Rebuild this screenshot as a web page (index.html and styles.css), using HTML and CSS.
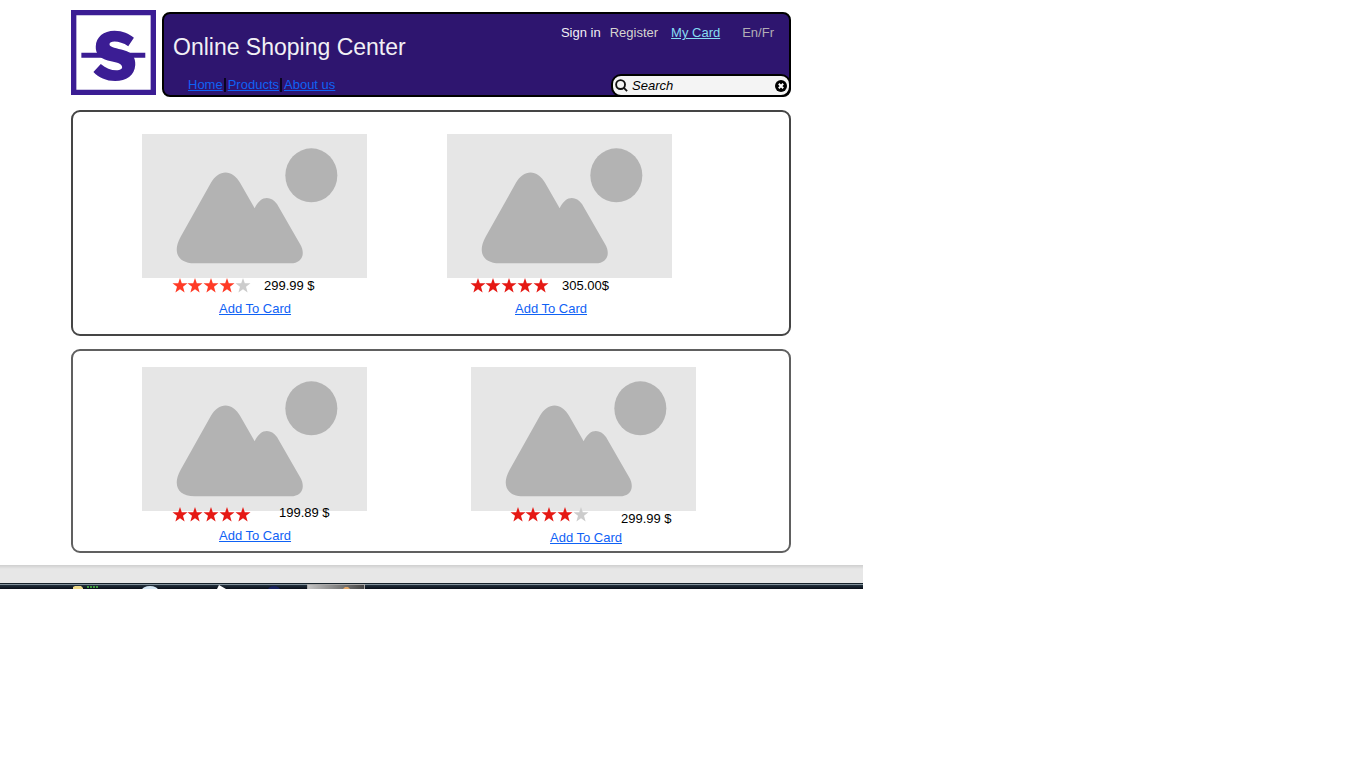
FILE: index.html
```html
<!DOCTYPE html>
<html lang="en">
<head>
<meta charset="utf-8">
<meta name="viewport" content="width=device-width, initial-scale=1">
<title>Online Shoping Center</title>
<link rel="stylesheet" href="styles.css">
</head>
<body>
<svg class="sprite" aria-hidden="true">
  <symbol id="picture" viewBox="0 0 675 432">
    <ellipse cx="508" cy="124" rx="78" ry="81"/>
    <path d="M116 308 L206 148 C230 105 271 105 295 148 L338 223 C356 183 387 185 405 210 L474 330 C492 360 480 388 446 388 L158 388 C104 388 92 350 116 308Z"/>
  </symbol>
  <symbol id="star" viewBox="0 0 16 16">
    <path d="M8 0 L9.9 5.6 L16 5.7 L11.2 9.4 L12.9 15.4 L8 12 L3.1 15.4 L4.8 9.4 L0 5.7 L6.1 5.6Z"/>
  </symbol>
  <symbol id="stars" viewBox="0 0 79 15">
    <use href="#star" x="0" width="16" height="15"/>
    <use href="#star" x="15" width="16" height="15"/>
    <use href="#star" x="31" width="16" height="15"/>
    <use href="#star" x="47" width="16" height="15"/>
    <use href="#star" class="last" x="63" width="16" height="15"/>
  </symbol>
</svg>
<div class="page">
  <div class="shop">
    <header class="top">
      <a class="logo" href="#" aria-label="Shop logo">
        <svg viewBox="0 0 254 254" aria-hidden="true">
          <path fill="#fff" stroke="#3b1d94" stroke-width="16" d="M8 8H246V246H8Z"/>
          <path fill="#3b1d94" d="M188 83 L171 108 C147 91 115 90 115 102 C115 112 138 114 158 120 C184 127 193 142 192 164 C190 195 165 212 132 212 C105 212 82 201 67 185 L89 161 C105 175 122 181 139 180 C153 179 155 172 151 166 C147 157 127 156 110 151 C85 144 73 130 74 109 C75 81 97 62 130 62 C155 62 173 71 188 83Z"/>
          <path fill="#3b1d94" d="M31 128H82L112 143H31ZM150 128H222V143H184Z"/>
        </svg>
      </a>
      <div class="banner">
        <div class="brand">
          <h1>Online Shoping Center</h1>
          <nav class="menu" aria-label="Main">
            <a href="#">Home</a><span class="bar"></span><a href="#">Products</a><span class="bar"></span><a href="#">About us</a>
          </nav>
        </div>
        <div class="side">
          <nav class="account" aria-label="Account">
            <a class="signin" href="#">Sign in</a>
            <a class="register" href="#">Register</a>
            <a class="cart" href="#">My Card</a>
            <a class="lang" href="#">En/Fr</a>
          </nav>
          <form class="search" role="search">
            <svg class="lens" viewBox="0 0 14 14" aria-hidden="true"><circle cx="6" cy="6" r="4.8"/><path d="M9.3 9.3L13 13"/></svg>
            <input type="text" placeholder="Search" aria-label="Search">
            <button type="reset" aria-label="Clear search"><svg viewBox="0 0 12 12" aria-hidden="true"><circle cx="6" cy="6" r="6"/><path d="M3.8 3.8L8.2 8.2M8.2 3.8L3.8 8.2"/></svg></button>
          </form>
        </div>
      </div>
    </header>
    <main>
      <section class="panel first">
        <article class="product">
          <svg class="photo" role="img" aria-label="Product picture"><use href="#picture"/></svg>
          <div class="meta"><svg class="rating bright four" role="img" aria-label="4 out of 5"><use href="#stars"/></svg><span class="price">299.99 $</span></div>
          <a class="add" href="#">Add To Card</a>
        </article>
        <article class="product b">
          <svg class="photo" role="img" aria-label="Product picture"><use href="#picture"/></svg>
          <div class="meta"><svg class="rating" role="img" aria-label="5 out of 5"><use href="#stars"/></svg><span class="price">305.00$</span></div>
          <a class="add" href="#">Add To Card</a>
        </article>
      </section>
      <section class="panel second">
        <article class="product c">
          <svg class="photo" role="img" aria-label="Product picture"><use href="#picture"/></svg>
          <div class="meta"><svg class="rating" role="img" aria-label="5 out of 5"><use href="#stars"/></svg><span class="price">199.89 $</span></div>
          <a class="add" href="#">Add To Card</a>
        </article>
        <article class="product d">
          <svg class="photo" role="img" aria-label="Product picture"><use href="#picture"/></svg>
          <div class="meta"><svg class="rating four" role="img" aria-label="4 out of 5"><use href="#stars"/></svg><span class="price">299.99 $</span></div>
          <a class="add" href="#">Add To Card</a>
        </article>
      </section>
    </main>
  </div>
  <div class="desk"></div>
  <div class="taskbar">
    <svg class="icons" viewBox="0 0 236 4" aria-hidden="true">
      <path fill="#f0dc8c" d="M2 4V2L4 1H10L12 3V4Z"/>
      <path stroke="#3f9a3f" stroke-width="2" stroke-dasharray="2 1" d="M16 2H27"/>
      <ellipse cx="79" cy="5" rx="8" ry="4" fill="#d5e6f3"/>
      <path fill="#fff" d="M146 4L148 0L155 4Z"/>
      <ellipse cx="203" cy="5" rx="6" ry="4" fill="#17215c"/>
    </svg>
    <svg class="task" viewBox="0 0 56 4" aria-hidden="true"><path fill="#e0a566" d="M35 4L37 2H40L42 4Z"/></svg>
  </div>
</div>
</body>
</html>
```
FILE: styles.css
```css
* { box-sizing: border-box; }
body {
  margin: 0;
  background: #fff;
  color: #000;
  font: 13px/15px "Liberation Sans", Arial, sans-serif;
}
a { color: #0f62f5; }
.sprite { position: absolute; width: 0; height: 0; }
.page { max-width: 863px; }
.shop { padding: 10px 72px 12px 71px; }

.top { display: flex; gap: 6px; margin-bottom: 13px; }
.logo { flex: none; width: 85px; height: 85px; }
.logo svg { display: block; width: 100%; height: 100%; }
.banner {
  flex: 1;
  display: flex;
  justify-content: space-between;
  margin-top: 2px;
  border: 2px solid #000;
  border-radius: 8px;
  background: #2e156f;
}
.brand { padding: 19px 0 3px 9px; }
h1 { margin: 0; color: #f2f0f5; font-size: 23px; line-height: 28px; font-weight: 400; }
.menu { display: flex; margin: 16px 0 0 15px; }
.bar { width: 2px; margin: 1px 2px 0 1px; background: #0a0520; }

.side { display: flex; flex-direction: column; justify-content: space-between; align-items: flex-end; }
.account { display: flex; margin-top: 11px; padding-right: 15px; }
.account a { text-decoration: none; }
.account .signin { margin-right: 9px; color: #f2f0f5; }
.account .register { margin-right: 13px; color: #d6d4d0; }
.account .cart { margin-right: 22px; color: #86dcf2; text-decoration: underline; }
.account .lang { color: #b3adb5; }
.search {
  display: flex;
  align-items: center;
  width: 180px;
  height: 23px;
  margin: 0 -2px -2px 0;
  padding: 0 2px;
  border: 2px solid #000;
  border-radius: 10px;
  background: #f4f4f4;
}
.lens { flex: none; width: 13px; height: 13px; fill: none; stroke: #111; stroke-width: 2; }
.search input {
  flex: 1;
  min-width: 0;
  padding: 0 0 0 4px;
  border: 0;
  background: none;
  font: italic 13px/15px "Liberation Sans", Arial, sans-serif;
}
.search input::placeholder { color: #000; opacity: 1; }
.search button { flex: none; width: 12px; height: 12px; padding: 0; border: 0; background: none; }
.search button svg { display: block; width: 12px; height: 12px; }
.search button path { stroke: #fff; stroke-width: 2; }

.panel { display: flex; border: 2px solid #454545; border-radius: 9px; }
.first { gap: 80px; padding: 22px 69px 18px; }
.second { gap: 104px; margin-top: 13px; padding: 16px 69px 6px; border-color: #606060; }
.product { width: 225px; }
.photo { display: block; width: 100%; height: 144px; background: #e6e6e6; fill: #b3b3b3; }
.meta { display: flex; align-items: flex-start; gap: 13px; padding-left: 30px; }
.rating { flex: none; width: 79px; height: 15px; fill: #e51914; --last: #e51914; }
.bright { fill: #ff3b26; }
.four { --last: #ccc; }
.last { fill: var(--last); }
.add { display: block; width: fit-content; margin: 8px 0 0 77px; }
.b .meta { padding-left: 23px; }
.b .add { margin-left: 68px; }
.c .meta { gap: 28px; margin-top: -6px; }
.c .rating { margin-top: 2px; }
.c .add { margin-top: 6px; }
.d .meta { gap: 32px; margin-top: -4px; padding-left: 39px; }
.d .price { margin-top: 4px; }
.d .add { margin: 4px 0 0 79px; }

.desk { height: 18px; background: linear-gradient(#cfcfcf, #e7e7e7 4px); }
.taskbar {
  display: flex;
  align-items: flex-end;
  height: 6px;
  padding-left: 71px;
  background: linear-gradient(#17232b 1px, #82909a 1px, #82909a 2px, #22313d 2px, #090e18);
}
.icons { width: 236px; height: 4px; }
.task {
  width: 58px;
  height: 5px;
  border: 1px solid #aaa;
  border-bottom: 0;
  background: linear-gradient(100deg, #c4c4c4, #777 60%, #444);
}
```
